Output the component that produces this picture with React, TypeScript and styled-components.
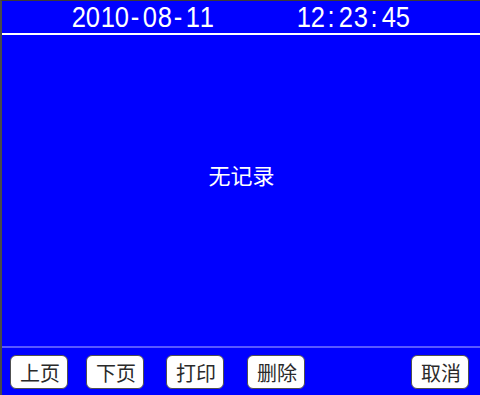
import { createGlobalStyle } from "styled-components";
import styled from "styled-components";

const GlobalStyle = createGlobalStyle`
  html, body {
    margin: 0;
    padding: 0;
    background: #0000ff;
  }
`;

const buttons = [
  { label: "上页", gap: 8 },
  { label: "下页", gap: 18 },
  { label: "打印", gap: 22 },
  { label: "删除", gap: 23 },
];

// fixed-width digit cells, like the LCD font of the panel
const Readout = ({ text, gap }: { text: string; gap?: number }) => (
  <Clock $gap={gap}>
    {text.split("").map((ch, i) => (
      <Cell key={i}>{ch}</Cell>
    ))}
  </Clock>
);

export default function App() {
  return (
    <>
      <GlobalStyle />
      <Screen>
        <Header>
          <Readout text="2010-08-11" />
          <Readout text="12:23:45" gap={82} />
        </Header>
        <Body>
          <Message>无记录</Message>
        </Body>
        <Footer>
          {buttons.map((b) => (
            <KeyButton key={b.label} $gap={b.gap}>
              {b.label}
            </KeyButton>
          ))}
          <KeyButton $last>取消</KeyButton>
        </Footer>
      </Screen>
    </>
  );
}

const Screen = styled.div`
  width: 480px;
  height: 395px;
  box-sizing: border-box;
  display: flex;
  flex-direction: column;
  background: #0000ff;
  border-top: 1px solid #3a3a3a;
  border-left: 2px solid #4a4a4a;
  overflow: hidden;
`;

const Header = styled.div`
  height: 34px;
  flex: none;
  box-sizing: border-box;
  display: flex;
  align-items: center;
  padding-left: 69px;
  border-bottom: 2px solid #ffffff;
`;

const Clock = styled.span<{ $gap?: number }>`
  display: flex;
  margin-left: ${(p) => p.$gap ?? 0}px;
  font-family: "Liberation Sans", Arial, sans-serif;
  font-size: 29px;
  line-height: 31px;
  color: #ffffff;
`;

const Cell = styled.span`
  display: inline-block;
  width: 14.25px;
  text-align: center;
  transform: scaleX(0.88);
`;

const Body = styled.div`
  flex: 1;
  display: flex;
  justify-content: center;
  padding-top: 126px;
`;

const Message = styled.div`
  font-family: "Noto Sans CJK SC", sans-serif;
  font-size: 22px;
  line-height: 26px;
  height: 26px;
  color: #ffffff;
  margin-left: 1px;
`;

const Footer = styled.div`
  height: 49px;
  flex: none;
  box-sizing: border-box;
  display: flex;
  align-items: flex-start;
  padding-top: 7px;
  padding-right: 11px;
  border-top: 2px solid #5858ff;
`;

const KeyButton = styled.div<{ $gap?: number; $last?: boolean }>`
  width: 58px;
  height: 34px;
  box-sizing: border-box;
  margin-left: ${(p) => (p.$last ? "auto" : `${p.$gap ?? 0}px`)};
  display: flex;
  align-items: center;
  justify-content: center;
  background: #ffffff;
  border: 1px solid #505050;
  border-radius: 6px;
  font-family: "Noto Sans CJK SC", sans-serif;
  font-size: 20px;
  color: #2a2a2a;
  padding-left: 2px;
`;
